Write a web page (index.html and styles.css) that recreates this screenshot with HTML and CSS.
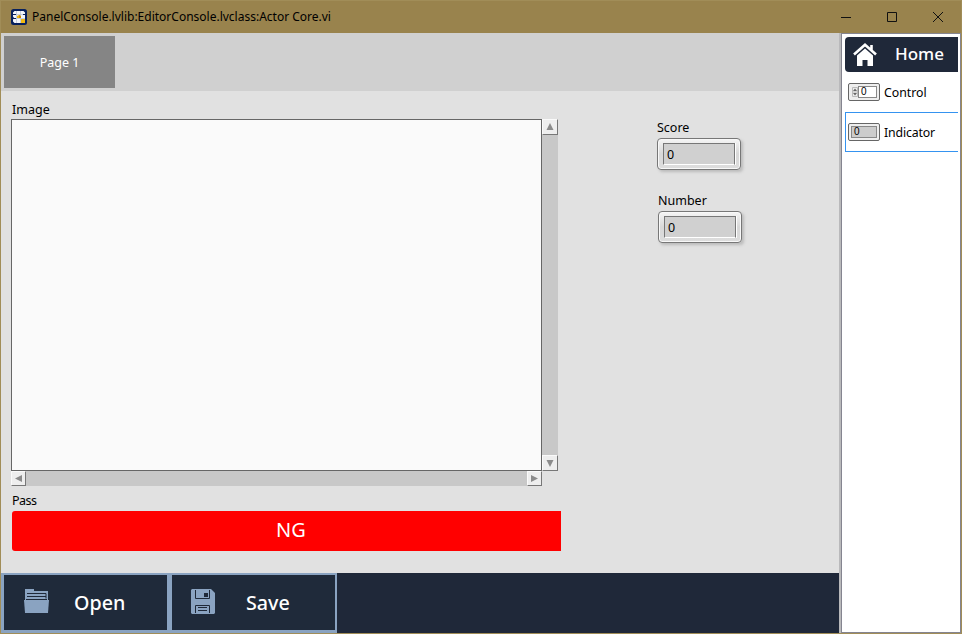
FILE: index.html
```html
<!DOCTYPE html>
<html lang="en">
<head>
<meta charset="utf-8">
<title>PanelConsole</title>
<link rel="stylesheet" href="styles.css">
</head>
<body>
<div class="window">
  <header class="titlebar">
    <svg class="app-icon" width="16" height="16" viewBox="0 0 16 16">
      <rect width="16" height="16" rx="2.5" fill="#07205c"/>
      <path d="M3.500 2h9l1.500 1.500v9L12.500 14h-9L2 12.500v-2L3 9 2 7.500v-4z" fill="#f4f6f9"/>
      <path d="M2 5.500h12M2 9.500h12M5.500 2v12M9.500 2v12" stroke="#b4bfd2" stroke-width=".7"/>
      <path d="M2 5.500h3M12 5.500h2M2 9.500h3" stroke="#07205c"/>
      <path d="M6 7l2-1 2 1v2H6zM10 10h4v4h-4z" fill="#f0b913"/>
      <path d="M8 6l2 1v2H8z" fill="#c98b08"/>
    </svg>
    <span class="title">PanelConsole.lvlib:EditorConsole.lvclass:Actor Core.vi</span>
    <div class="controls">
      <svg width="10" height="10" viewBox="0 0 10 10"><path d="M0 5.500h10"/></svg>
      <svg width="10" height="10" viewBox="0 0 10 10"><path d="M.5.5h9v9h-9z"/></svg>
      <svg width="10" height="10" viewBox="0 0 10 10"><path d="M0 0l10 10M10 0L0 10"/></svg>
    </div>
  </header>
  <div class="body">
    <main class="main">
      <nav class="tabs"><div class="tab">Page 1</div></nav>
      <section class="page">
        <div class="left">
          <div class="label image-label">Image</div>
          <div class="viewer">
            <div class="canvas"></div>
            <div class="vbar">
              <div class="arrow"><svg width="9" height="9" viewBox="0 0 9 9"><path d="M4 0L7.500 7H.5z"/></svg></div>
              <div class="arrow"><svg width="9" height="9" viewBox="0 0 9 9"><path d="M.5 1h7L4 8z"/></svg></div>
            </div>
            <div class="hbar">
              <div class="arrow"><svg width="9" height="9" viewBox="0 0 9 9"><path d="M8 1v7L1 4.500z"/></svg></div>
              <div class="arrow"><svg width="9" height="9" viewBox="0 0 9 9"><path d="M1 1v7l7-3.500z"/></svg></div>
            </div>
          </div>
          <div class="label pass-label">Pass</div>
          <div class="result"><span>NG</span></div>
        </div>
        <div class="values">
          <div class="label score-label">Score</div>
          <div class="numeric"><div class="well">0</div></div>
          <div class="label number-label">Number</div>
          <div class="numeric second"><div class="well">0</div></div>
        </div>
      </section>
      <footer class="toolbar">
        <div class="button open">
          <svg width="25" height="25" viewBox="0 0 25 25">
            <path d="M1 0h9v2h14v9H1z" fill="#8aa3c1"/>
            <path d="M3 4.500h19v5M3 7.500h19" fill="none" stroke="#1f2939"/>
            <path d="M2 10.500h21" stroke="#1f2939"/>
            <path d="M0 11h25l-1 13H1z" fill="#8aa3c1"/>
          </svg>
          <span>Open</span>
        </div>
        <div class="button save">
          <svg width="24" height="25" viewBox="0 0 24 25">
            <path d="M1 0h19l4 4v20l-1 1H1l-1-1V1z" fill="#8aa3c1"/>
            <path d="M4.500 1v8.500h14V1M4.500 24v-7.500h14V24M7 18.500h9M7 21.500h9" fill="none" stroke="#1f2939"/>
            <path d="M13 4h4v4h-4z" fill="#1f2939"/>
          </svg>
          <span>Save</span>
        </div>
      </footer>
    </main>
    <aside class="palette">
      <div class="home">
        <svg width="24" height="23" viewBox="0 0 24 23">
          <path d="M4 12.500L12 5.500l8 7V23h-5.500v-6h-5v6H4z" fill="#fff"/>
          <path d="M1 11.500L12 1.800l11 9.700M18.500 2v5" fill="none" stroke="#fff" stroke-width="2.600"/>
        </svg>
        <span>Home</span>
      </div>
      <div class="item">
        <div class="mini control"><svg width="6" height="10" viewBox="0 0 6 10"><path d="M.5.5h5v9h-5zM.5 5h5" fill="#eee" stroke="#bbb"/><path d="M1 4L3 1.500 5 4zM1 6l2 2.500L5 6z" fill="#666"/></svg><div class="mini-well">0</div></div>
        <span class="item-text">Control</span>
      </div>
      <div class="item selected">
        <div class="mini"><div class="mini-well">0</div></div>
        <span class="item-text">Indicator</span>
      </div>
    </aside>
  </div>
</div>
</body>
</html>
```
FILE: styles.css
```css
* { box-sizing: border-box; }
body { margin: 0; font-family: "Noto Sans", "Open Sans", sans-serif; font-size: 12.500px; color: #000; overflow: hidden; }
svg { display: block; flex: none; }
.window { width: 962px; height: 634px; display: flex; flex-direction: column; background: #e1e1e1; border: 1px solid #a18d58; border-top-width: 0; }
.titlebar { height: 33px; flex: none; display: flex; align-items: center; background: #99834d; border-top: 1px solid #a18d58; padding: 0 18px 0 10px; }
.title { margin-left: 5px; line-height: 18px; white-space: nowrap; font-size: 12px; }
.controls { margin-left: auto; display: flex; gap: 36px; padding-bottom: 1px; }
.controls svg { fill: none; stroke: #111; }
.body { flex: 1; display: flex; min-height: 0; }
.main { width: 838px; display: flex; flex-direction: column; }
.tabs { height: 58px; background: #d0d0d0; padding: 3px; }
.tab { width: 111px; height: 52px; background: #858585; color: #fff; text-align: center; line-height: 53px; }
.page { flex: 1; display: flex; }
.left { width: 560px; padding: 10px 0 0 10px; }
.label { height: 18px; line-height: 18px; white-space: nowrap; padding-left: 1px; }
.pass-label { letter-spacing: -.5px; }
.viewer { display: grid; grid-template: 352px 15px / 531px 16px; }
.canvas { background: #fafafa; border: 1px solid #666; }
.vbar { background: #c8c8c8; display: flex; flex-direction: column; justify-content: space-between; }
.hbar { background: #c8c8c8; display: flex; justify-content: space-between; }
.arrow { width: 15px; height: 15px; background: #eee; border: 1px solid #fafafa; border-right-color: #777; border-bottom-color: #777; display: flex; align-items: center; justify-content: center; }
.vbar .arrow { width: 16px; height: 16px; }
.arrow svg { fill: #8b8b8b; }
.pass-label { margin-top: 6px; }
.result { width: 549px; height: 40px; margin: 1px 0 0 1px; border-radius: 3px 0 0 3px; background: #f00; color: #fff; font-size: 20px; line-height: 38px; padding-left: 264px; }
.values { padding: 28px 0 0 96px; }
.values .label { padding-left: 0; }
.numeric { width: 84px; height: 32px; margin-top: 1px; border: 1px solid #777; border-radius: 4px; padding: 4px 5px; background: linear-gradient(#f5f5f5, #d8d8d8 50%, #ddd); box-shadow: inset 0 0 0 1px #f8f8f8, 2px 2px 3px #bbb; }
.numeric.second, .number-label { margin-left: 1px; }
.number-label { margin-top: 22px; }
.well { height: 22px; line-height: 21px; padding-left: 3px; background: #d0d0d0; border: 1px solid #777; border-bottom-color: #fff; box-shadow: 1px 0 #fff; }
.toolbar { height: 60px; display: flex; background: #1f2839; }
.button { height: 60px; display: flex; align-items: center; background: #1f2a3a; border: 2px solid #8aa3c1; border-bottom-width: 3px; border-left-width: 3px; color: #fff; font-size: 19.700px; font-weight: 500; }
.button svg { margin-top: -2px; }
.open { width: 168px; padding-left: 20px; }
.open span { margin-left: 25px; }
.save { width: 168px; padding-left: 19px; }
.save span { margin-left: 31px; }
.palette { flex: 1; background: #fff; border: 1px solid #858590; margin-left: 2px; padding: 3px 2px 0 3px; box-shadow: -2px 0 #b9b9bb; }
.home { height: 35px; background: #1f2839; border-radius: 4px 0 0 4px; color: #fff; display: flex; align-items: center; padding-left: 8px; font-size: 17px; font-weight: 500; }
.home span { margin-left: 18px; line-height: 24px; padding-bottom: 2px; }
.item { height: 40px; display: flex; align-items: center; padding-left: 3px; }
.selected { border: 1px solid #3593f0; border-right: 0; padding-left: 2px; }
.mini { width: 32px; height: 18px; border: 1px solid #666; border-radius: 2px; padding: 2px; background: #eee; display: flex; align-items: center; }
.mini-well { flex: 1; height: 12px; background: #ccc; border: 1px solid #888; font-family: "Liberation Sans", sans-serif; font-size: 10px; line-height: 10px; padding-left: 2px; }
.control .mini-well { background: #fff; }
.control svg { margin-left: 1px; }
.item-text { margin-left: 4px; font-size: 12.300px; }
.selected .item-text { letter-spacing: -.15px; }
```
